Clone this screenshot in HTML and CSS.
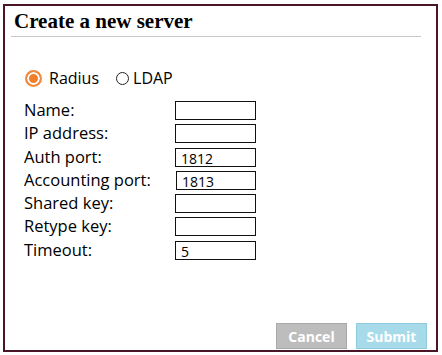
FILE: index.html
```html
<!DOCTYPE html>
<html lang="en">
<head>
<meta charset="utf-8">
<title>Create a new server</title>
<link rel="stylesheet" href="styles.css">
</head>
<body>
  <div class="dialog">
    <h1 class="title">Create a new server</h1>
    <div class="types">
      <label class="type"><span class="radio checked"></span>Radius</label>
      <label class="type"><span class="radio"></span>LDAP</label>
    </div>
    <div class="fields">
      <label>Name:</label><div class="box"></div>
      <label>IP address:</label><div class="box"></div>
      <label>Auth port:</label><div class="box">1812</div>
      <label>Accounting port:</label><div class="box shifted">1813</div>
      <label>Shared key:</label><div class="box"></div>
      <label>Retype key:</label><div class="box"></div>
      <label>Timeout:</label><div class="box">5</div>
    </div>
    <div class="actions">
      <button class="btn cancel">Cancel</button>
      <button class="btn submit">Submit</button>
    </div>
  </div>
</body>
</html>
```
FILE: styles.css
```css
* {
  margin: 0;
  padding: 0;
  box-sizing: border-box;
}

body {
  margin: 0;
  background: #fff;
  font-family: "Open Sans", "Liberation Sans", sans-serif;
}

.dialog {
  margin: 4px 4px 3px 3px;
  height: 348px;
  border: 2px solid #4a1526;
  display: flex;
  flex-direction: column;
  padding: 0 9px 0 6px;
}

.title {
  font-family: "Liberation Serif", serif;
  font-weight: bold;
  font-size: 21px;
  line-height: 26px;
  padding: 2px 0 0 3px;
  height: 31px;
  margin-right: 6px;
  border-bottom: 1px solid #c8c8c8;
}

.types {
  display: flex;
  align-items: center;
  margin: 31px 0 0 14px;
  font-size: 16px;
  height: 20px;
  gap: 17px;
}

.type {
  display: flex;
  align-items: center;
}

.radio {
  width: 13px;
  height: 13px;
  border: 1.5px solid #222;
  border-radius: 50%;
  margin-right: 4px;
}

.radio.checked {
  width: 17px;
  height: 17px;
  border: 2px solid #f08a3c;
  background: #f07f2c;
  box-shadow: inset 0 0 0 2px #fff;
  margin-right: 7px;
}

.fields {
  display: grid;
  grid-template-columns: 151px 81px;
  grid-auto-rows: 23.3px;
  margin: 12px 0 0 13px;
  font-size: 16.5px;
}

.fields label {
  line-height: 20px;
}

.box {
  height: 19px;
  margin-top: 1px;
  border: 1px solid #111;
  font-size: 14px;
  line-height: 19px;
  padding: 0 5px;
}

.box.shifted {
  margin-left: 1px;
}

.actions {
  margin-top: auto;
  display: flex;
  justify-content: flex-end;
  gap: 9px;
  padding-bottom: 1px;
}

.btn {
  width: 71px;
  height: 26px;
  color: #fff;
  font-family: "Open Sans", sans-serif;
  font-weight: bold;
  font-size: 14px;
  border: 1px solid;
}

.cancel {
  background: #bdbdbd;
  border-color: #a8a8a8;
}

.submit {
  background: #a7dbea;
  border-color: #8fcbe0;
}
```
